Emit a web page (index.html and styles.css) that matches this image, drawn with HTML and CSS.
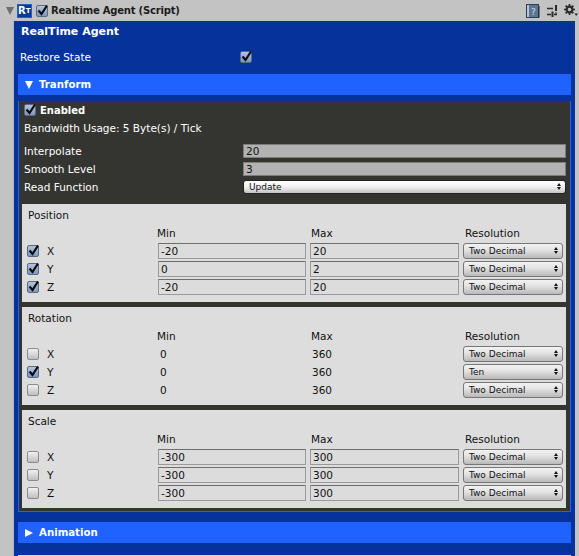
FILE: index.html
```html
<!DOCTYPE html>
<html>
<head>
  <link rel="stylesheet" href="styles.css">
</head>
<body>
<svg class="defs" width="0" height="0">
  <symbol id="tick" viewBox="0 0 13 13">
    <path d="M2.5 6.5 L5.5 10 L11 1.5" fill="none" stroke="#0b0b0b" stroke-width="2.2"/>
  </symbol>
</svg>
<header class="title">
  <span class="fold-gray"></span>
  <span class="script-icon">R<small>T</small></span>
  <span class="check on"><svg><use href="#tick"/></svg></span>
  <span class="title-text">Realtime Agent (Script)</span>
  <span class="title-icons">
    <svg class="book" width="14" height="14" viewBox="0 0 14 14">
      <rect x="0.5" y="0.5" width="12" height="13" fill="#5b7595" stroke="#2e3d52"/>
      <rect x="1" y="1" width="2" height="12" fill="#b9c4d0"/>
      <path d="M13 2 V13.5" stroke="#1d2733" stroke-width="1"/>
      <text x="7.5" y="11" class="book-q">?</text>
    </svg>
    <svg class="sliders" width="11" height="12" viewBox="0 0 11 12">
      <path d="M0 3.5 H6 M0 9.5 H4 M7 9.5 H10" stroke="#2a2a2a" stroke-width="1.6"/>
      <path d="M9 0 V6 M5.5 6.5 V12" stroke="#2a2a2a" stroke-width="2"/>
      <rect x="8" y="7.5" width="2" height="1" fill="#2a2a2a"/>
    </svg>
    <svg class="gear" width="14" height="13" viewBox="0 0 14 13">
      <circle cx="5.5" cy="5.5" r="2.9" fill="none" stroke="#2a2a2a" stroke-width="2.2"/>
      <path d="M5.5 0 V2 M5.5 9 V11 M0 5.5 H2 M9 5.5 H11 M1.6 1.6 L3 3 M8 8 L9.4 9.4 M1.6 9.4 L3 8 M8 3 L9.4 1.6" stroke="#2a2a2a" stroke-width="1.7"/>
      <path d="M10.5 9.5 H14 L12.2 12 Z" fill="#2a2a2a"/>
    </svg>
  </span>
</header>

<main class="inspector">
  <h1 class="agent-name">RealTime Agent</h1>
  <div class="restore">
    <span>Restore State</span>
    <span class="check on"><svg><use href="#tick"/></svg></span>
  </div>

  <section class="foldout">
    <h2 class="fold-head"><span class="tri down"></span>Tranform</h2>
    <div class="fold-body">
      <div class="enabled">
        <span class="check on"><svg><use href="#tick"/></svg></span>
        <strong>Enabled</strong>
      </div>
      <div class="bandwidth">Bandwidth Usage: 5 Byte(s) / Tick</div>

      <div class="prop">
        <label>Interpolate</label>
        <div class="field dark">20</div>
      </div>
      <div class="prop">
        <label>Smooth Level</label>
        <div class="field dark">3</div>
      </div>
      <div class="prop prop-select">
        <label>Read Function</label>
        <div class="popup wide">Update<span class="arrows"></span></div>
      </div>

      <div class="group">
        <div class="group-name">Position</div>
        <div class="axis-head"><span>Min</span><span>Max</span><span>Resolution</span></div>
        <div class="axis">
          <span class="check on"><svg><use href="#tick"/></svg></span><span class="axis-name">X</span>
          <div class="field">-20</div><div class="field">20</div>
          <div class="popup">Two Decimal<span class="arrows"></span></div>
        </div>
        <div class="axis">
          <span class="check on"><svg><use href="#tick"/></svg></span><span class="axis-name">Y</span>
          <div class="field">0</div><div class="field">2</div>
          <div class="popup">Two Decimal<span class="arrows"></span></div>
        </div>
        <div class="axis">
          <span class="check on"><svg><use href="#tick"/></svg></span><span class="axis-name">Z</span>
          <div class="field">-20</div><div class="field">20</div>
          <div class="popup">Two Decimal<span class="arrows"></span></div>
        </div>
      </div>

      <div class="group">
        <div class="group-name">Rotation</div>
        <div class="axis-head"><span>Min</span><span>Max</span><span>Resolution</span></div>
        <div class="axis">
          <span class="check"></span><span class="axis-name">X</span>
          <div class="plain">0</div><div class="plain">360</div>
          <div class="popup">Two Decimal<span class="arrows"></span></div>
        </div>
        <div class="axis">
          <span class="check on"><svg><use href="#tick"/></svg></span><span class="axis-name">Y</span>
          <div class="plain">0</div><div class="plain">360</div>
          <div class="popup">Ten<span class="arrows"></span></div>
        </div>
        <div class="axis">
          <span class="check"></span><span class="axis-name">Z</span>
          <div class="plain">0</div><div class="plain">360</div>
          <div class="popup">Two Decimal<span class="arrows"></span></div>
        </div>
      </div>

      <div class="group">
        <div class="group-name">Scale</div>
        <div class="axis-head"><span>Min</span><span>Max</span><span>Resolution</span></div>
        <div class="axis">
          <span class="check"></span><span class="axis-name">X</span>
          <div class="field">-300</div><div class="field">300</div>
          <div class="popup">Two Decimal<span class="arrows"></span></div>
        </div>
        <div class="axis">
          <span class="check"></span><span class="axis-name">Y</span>
          <div class="field">-300</div><div class="field">300</div>
          <div class="popup">Two Decimal<span class="arrows"></span></div>
        </div>
        <div class="axis">
          <span class="check"></span><span class="axis-name">Z</span>
          <div class="field">-300</div><div class="field">300</div>
          <div class="popup">Two Decimal<span class="arrows"></span></div>
        </div>
      </div>
    </div>
  </section>

  <section class="foldout closed">
    <h2 class="fold-head"><span class="tri right"></span>Animation</h2>
  </section>
  <div class="next-edge"></div>
</main>
</body>
</html>
```
FILE: styles.css
```css
html {
  height: 100%;
  overflow: hidden;
}
body {
  margin: 0;
  height: 556px;
  overflow: hidden;
  background: #c3c3c3;
  font-family: "DejaVu Sans", sans-serif;
  font-size: 10.5px;
  color: #111;
}
.defs {
  display: block;
}

/* title row */
.title {
  display: flex;
  align-items: center;
  height: 21px;
  padding-left: 6px;
}
.fold-gray {
  width: 0;
  height: 0;
  border-left: 4px solid transparent;
  border-right: 4px solid transparent;
  border-top: 8px solid #6f6f6f;
}
.script-icon {
  display: flex;
  align-items: flex-end;
  flex: none;
  box-sizing: border-box;
  width: 15px;
  height: 14px;
  margin-left: 3px;
  padding: 0 0 1px 0;
  overflow: hidden;
  background: #0b3a94;
  border: 1px solid #2a5fb4;
  color: #fff;
  font-weight: bold;
  font-size: 10px;
  line-height: 11px;
  white-space: nowrap;
}
.script-icon small {
  font-size: 7px;
  line-height: 9px;
}
.title .check {
  margin-left: 4px;
}
.title-text {
  margin-left: 3px;
  font-weight: bold;
  font-size: 10px;
  letter-spacing: -0.2px;
  color: #1c1c1c;
}
.title-icons {
  display: flex;
  align-items: center;
  margin-left: auto;
  padding-right: 1px;
}
.book-q {
  font-size: 9px;
  font-family: "DejaVu Sans", sans-serif;
  fill: #d8e0ea;
  text-anchor: middle;
}
.sliders {
  margin-left: 7px;
}
.gear {
  margin-left: 6px;
}

/* checkbox */
.check {
  display: block;
  flex: none;
  box-sizing: border-box;
  width: 12px;
  height: 12px;
  border: 1px solid #8b8b8b;
  border-radius: 2px;
  background: linear-gradient(#f1f1f1, #bfbfbf);
}
.check.on {
  background: linear-gradient(#b4c4dc, #7b97c1);
  border-color: #5b6a80;
}
.check svg {
  display: block;
  width: 13px;
  height: 13px;
  margin: -2px 0 0 -1px;
}

/* blue inspector */
.inspector {
  margin: 0 4px 0 14px;
  padding: 0 4px;
  height: 535px;
  background: #06339b;
  color: #fff;
  box-shadow: -1px 0 0 #b6b6b6;
}
.agent-name {
  margin: 0;
  height: 21px;
  padding-left: 3px;
  font-size: 11px;
  font-weight: bold;
  line-height: 21px;
}
.restore {
  display: flex;
  align-items: center;
  height: 30px;
  margin-bottom: 2px;
  padding-left: 2px;
}
.restore .check {
  margin-left: 149px;
}

.fold-head {
  display: flex;
  align-items: center;
  margin: 0;
  height: 21px;
  padding-left: 7px;
  background: #1f62ff;
  font-size: 10.2px;
  font-weight: bold;
}
.tri {
  width: 0;
  height: 0;
  margin-right: 6px;
}
.tri.down {
  border-left: 4px solid transparent;
  border-right: 4px solid transparent;
  border-top: 8px solid #fff;
}
.tri.right {
  border-top: 4px solid transparent;
  border-bottom: 4px solid transparent;
  border-left: 8px solid #fff;
}
.fold-body {
  border: 1px solid #1f62ff;
  border-top: none;
  padding: 0 4px 3px 3px;
  background: #343531;
}
.closed {
  margin-top: 10px;
}
.next-edge {
  height: 1px;
  margin-top: 12px;
  background: #d8d8d8;
}

.enabled {
  display: flex;
  align-items: center;
  gap: 4px;
  height: 18px;
  margin-top: 6px;
  padding-left: 2px;
}
.enabled strong {
  font-size: 10px;
}
.bandwidth {
  height: 18px;
  line-height: 18px;
  padding-left: 2px;
  margin-bottom: 5px;
}

.prop {
  display: flex;
  align-items: center;
  height: 18px;
  padding-left: 2px;
}
.prop label {
  width: 219px;
  flex: none;
}
.prop .field {
  flex: 1;
  height: 14px;
  line-height: 12px;
}
.prop-select {
  margin-bottom: 8px;
}

/* inputs */
.field {
  box-sizing: border-box;
  height: 16px;
  padding-left: 2px;
  background: #dcdcdc;
  border: 1px solid #9a9a9a;
  border-top-color: #6e6e6e;
  color: #111;
  line-height: 14px;
}
.field.dark {
  background: #b2b2b2;
  border-color: #7d7d7d;
  color: #111;
}
.plain {
  padding-left: 2px;
  line-height: 16px;
  color: #111;
}
.popup {
  position: relative;
  box-sizing: border-box;
  height: 16px;
  padding-left: 5px;
  background: linear-gradient(#f2f2f2, #e4e4e4 40%, #b9b9b9);
  border: 1px solid #777;
  border-radius: 3px;
  color: #111;
  font-size: 9px;
  line-height: 14px;
}
.popup.wide {
  flex: 1;
  height: 14px;
  line-height: 12px;
  background: linear-gradient(#ffffff, #f0f0f0 50%, #c4c4c4);
  border-color: #222;
}
.arrows {
  position: absolute;
  right: 4px;
  top: 50%;
  width: 4px;
  height: 7px;
  margin-top: -4px;
  background: #111;
  clip-path: path("M2 0L4 3H0Z M0 4H4L2 7Z");
}

/* gray groups */
.group {
  box-sizing: border-box;
  height: 98px;
  margin-top: 5px;
  padding-left: 5px;
  background: #dddddd;
  color: #111;
}
.prop-select + .group {
  margin-top: 0;
}
.group-name {
  height: 21px;
  line-height: 22px;
  padding-left: 1px;
}
.axis-head,
.axis {
  display: grid;
  grid-template-columns: 12px 111px 148px 149px 100px;
  column-gap: 4px;
}
.axis-head {
  height: 18px;
  line-height: 16px;
}
.axis {
  align-items: center;
  height: 16px;
  margin-bottom: 2px;
}
.axis-head span:nth-child(1) {
  grid-column: 3;
  margin-left: -1px;
}
.axis-head span:nth-child(2) {
  margin-left: 1px;
}
.axis-head span:nth-child(3) {
  margin-left: 2px;
}
.axis-name {
  padding-left: 4px;
}
```
